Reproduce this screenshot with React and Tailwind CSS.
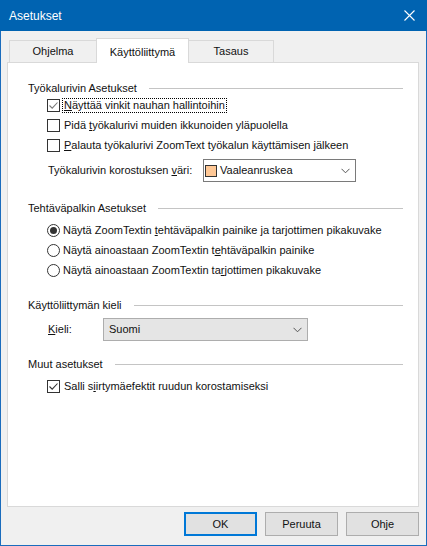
import React from "react";

function CheckBox({ checked, light }) {
  return (
    <span className="flex h-[13px] w-[13px] shrink-0 items-center justify-center border border-[#333333] bg-white">
      {checked && (
        <svg width="11" height="11" viewBox="0 0 11 11">
          <path d="M1.5 5.5 L4.2 8.2 L9.5 2.5" fill="none" stroke={light ? "#7a7a7a" : "#333333"} strokeWidth="1.1" />
        </svg>
      )}
    </span>
  );
}

function Radio({ checked }) {
  return (
    <span className="flex h-[13px] w-[13px] shrink-0 items-center justify-center rounded-full border border-[#333333] bg-white">
      {checked && <span className="h-[7px] w-[7px] rounded-full bg-[#333333]" />}
    </span>
  );
}

function Chevron() {
  return (
    <svg width="9" height="6" viewBox="0 0 9 6">
      <path d="M0.5 0.8 L4.5 4.8 L8.5 0.8" fill="none" stroke="#555555" strokeWidth="1" />
    </svg>
  );
}

function Heading({ children, mt }) {
  return (
    <div className={"flex h-[14px] items-center pl-[20px] pr-[15px] " + mt}>
      <span className="whitespace-nowrap">{children}</span>
      <span className="ml-[12px] h-px flex-1 bg-[#c4c4c4]" />
    </div>
  );
}

function Row({ children, mt = "" }) {
  return <div className={"flex h-[20px] items-center pl-[39px] " + mt}>{children}</div>;
}

export default function App() {
  return (
    <div className="flex h-[546px] w-[427px] flex-col border-x border-b border-[#1a6cbd] bg-[#f0f0f0] font-['Liberation_Sans',Arial,sans-serif] text-[11px] text-[#111111]">
      {/* title bar */}
      <div className="-mx-px flex h-[31px] shrink-0 items-center justify-between bg-[#0063b1] pl-[9px] pr-[12px] text-[12px] text-white">
        <span>Asetukset</span>
        <svg width="11" height="11" viewBox="0 0 11 11">
          <path d="M0.5 0.5 L10.5 10.5 M10.5 0.5 L0.5 10.5" stroke="#ffffff" strokeWidth="1.1" />
        </svg>
      </div>

      {/* tabs */}
      <div className="mt-[7px] flex h-[24px] items-end pl-[8px]">
        <div className="flex h-[22px] w-[88px] items-center justify-center border-x border-t border-[#d9d9d9] bg-[#f0f0f0]">
          Ohjelma
        </div>
        <div className="relative z-10 -mb-px -ml-px flex h-[25px] w-[93px] items-start justify-center border-x border-t border-[#d9d9d9] bg-white pt-[5px]">
          Käyttöliittymä
        </div>
        <div className="-ml-px flex h-[22px] w-[86px] items-center justify-center border-x border-t border-[#d9d9d9] bg-[#f0f0f0]">
          Tasaus
        </div>
      </div>

      {/* panel */}
      <div className="ml-[6px] mr-[7px] h-[445px] border border-[#d9d9d9] bg-white">
        <Heading mt="mt-[18px]">Työkalurivin Asetukset</Heading>
        <Row>
          <CheckBox checked light />
          <span className="ml-[3px] px-px leading-[13px] outline-1 outline-dotted outline-black">
            <u>N</u>äyttää vinkit nauhan hallintoihin
          </span>
        </Row>
        <Row>
          <CheckBox />
          <span className="ml-[4px]">
            Pidä <u>t</u>yökalurivi muiden ikkunoiden yläpuolella
          </span>
        </Row>
        <Row>
          <CheckBox />
          <span className="ml-[4px]">
            <u>P</u>alauta työkalurivi ZoomText työkalun käyttämisen jälkeen
          </span>
        </Row>
        <div className="mt-[4px] flex h-[23px] items-center pl-[40px]">
          <span className="w-[155px]">
            Työkalurivin korostuksen <u>v</u>äri:
          </span>
          <div className="flex h-[23px] w-[153px] items-center border border-[#7a7a7a] bg-white pl-[1px] pr-[5px]">
            <span className="h-[12px] w-[12px] border border-[#333333] bg-[#ffc896]" />
            <span className="ml-[3px] flex-1">Vaaleanruskea</span>
            <Chevron />
          </div>
        </div>

        <Heading mt="mt-[19px]">Tehtäväpalkin Asetukset</Heading>
        <Row mt="mt-[5px]">
          <Radio checked />
          <span className="ml-[3px]">
            Näytä ZoomTextin <u>t</u>ehtäväpalkin painike ja tarjottimen pikakuvake
          </span>
        </Row>
        <Row>
          <Radio />
          <span className="ml-[3px]">
            Näytä ainoastaan ZoomTextin t<u>e</u>htäväpalkin painike
          </span>
        </Row>
        <Row>
          <Radio />
          <span className="ml-[3px]">
            Näytä ainoastaan ZoomTextin ta<u>r</u>jottimen pikakuvake
          </span>
        </Row>

        <Heading mt="mt-[18px]">Käyttöliittymän kieli</Heading>
        <div className="mt-[6px] flex h-[23px] items-center pl-[40px]">
          <span className="w-[55px]">
            <u>K</u>ieli:
          </span>
          <div className="flex h-[23px] w-[205px] items-center border border-[#adadad] bg-[#e5e5e5] pl-[5px] pr-[5px]">
            <span className="flex-1">Suomi</span>
            <Chevron />
          </div>
        </div>

        <Heading mt="mt-[16px]">Muut asetukset</Heading>
        <Row mt="mt-[5px]">
          <CheckBox checked />
          <span className="ml-[4px]">
            Salli s<u>i</u>irtymäefektit ruudun korostamiseksi
          </span>
        </Row>
      </div>

      {/* buttons */}
      <div className="mr-[7px] mt-[5px] flex justify-end gap-[8px]">
        <button className="flex h-[24px] w-[73px] items-center justify-center border-2 border-[#0078d7] bg-[#e1e1e1]">
          OK
        </button>
        <button className="flex h-[24px] w-[73px] items-center justify-center border border-[#adadad] bg-[#e1e1e1]">
          Peruuta
        </button>
        <button className="flex h-[24px] w-[73px] items-center justify-center border border-[#adadad] bg-[#e1e1e1]">
          Ohje
        </button>
      </div>
    </div>
  );
}
